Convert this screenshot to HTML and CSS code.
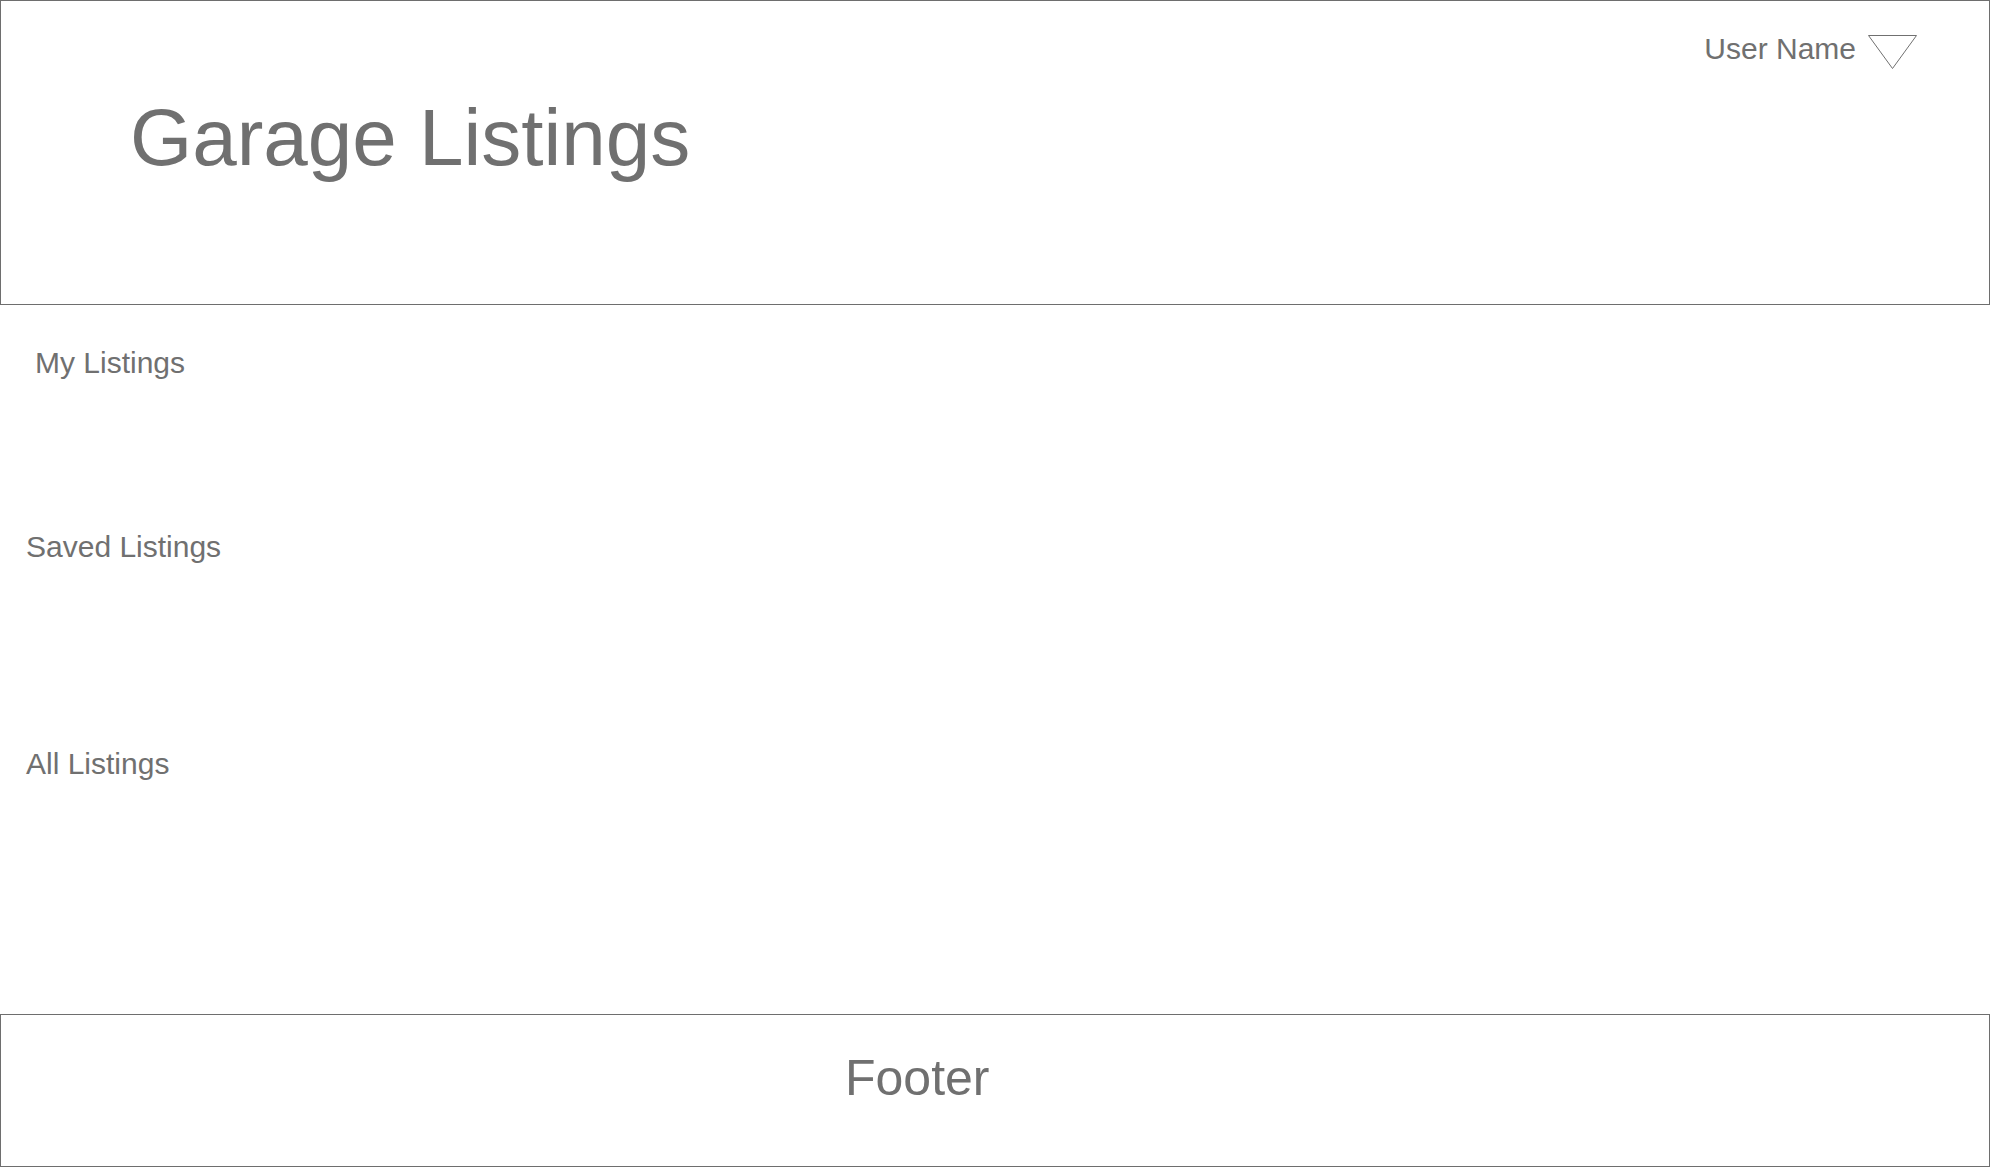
FILE: index.html
```html
<!DOCTYPE html>
<html lang="en">
<head>
<meta charset="utf-8">
<title>Garage Listings</title>
<link rel="stylesheet" href="styles.css">
</head>
<body>
<div class="page">
  <header class="header">
    <h1 class="title">Garage Listings</h1>
    <div class="user">
      <span class="user-name">User Name</span>
      <svg class="user-caret" width="49" height="34" viewBox="0 0 49 34" aria-hidden="true">
        <polygon points="0.5,0.5 48.5,0.5 24.5,33.5" fill="none" stroke="#707070" stroke-width="1"/>
      </svg>
    </div>
  </header>
  <main class="main">
    <h2 class="section section-my">My Listings</h2>
    <h2 class="section section-saved">Saved Listings</h2>
    <h2 class="section section-all">All Listings</h2>
  </main>
  <footer class="footer">
    <span class="footer-text">Footer</span>
  </footer>
</div>
</body>
</html>
```

FILE: styles.css
```css
* {
  box-sizing: border-box;
}

html, body {
  margin: 0;
  padding: 0;
  background: #ffffff;
}

body {
  font-family: "Liberation Sans", Arial, Helvetica, sans-serif;
  color: #707070;
}

.page {
  display: flex;
  flex-direction: column;
  width: 1990px;
  height: 1167px;
}

.header {
  display: flex;
  justify-content: space-between;
  align-items: flex-start;
  height: 305px;
  border: 1px solid #6e6e6e;
  padding: 0 72px 0 129px;
}

.title {
  margin: 97px 0 0 0;
  font-size: 80px;
  line-height: 80px;
  font-weight: normal;
}

.user {
  display: flex;
  align-items: flex-start;
  gap: 12px;
}

.user-name {
  margin-top: 33px;
  font-size: 30px;
  line-height: 30px;
}

.user-caret {
  display: block;
  margin-top: 34px;
}

.main {
  flex: 1;
  display: flex;
  flex-direction: column;
  align-items: flex-start;
}

.section {
  margin: 0;
  font-size: 30px;
  line-height: 30px;
  font-weight: normal;
}

.section-my {
  margin-top: 43px;
  padding-left: 35px;
}

.section-saved {
  margin-top: 154px;
  padding-left: 26px;
}

.section-all {
  margin-top: 187px;
  padding-left: 26px;
}

.footer {
  height: 153px;
  border: 1px solid #6e6e6e;
  padding: 38px 0 0 844px;
}

.footer-text {
  display: block;
  font-size: 50px;
  line-height: 50px;
}
```
